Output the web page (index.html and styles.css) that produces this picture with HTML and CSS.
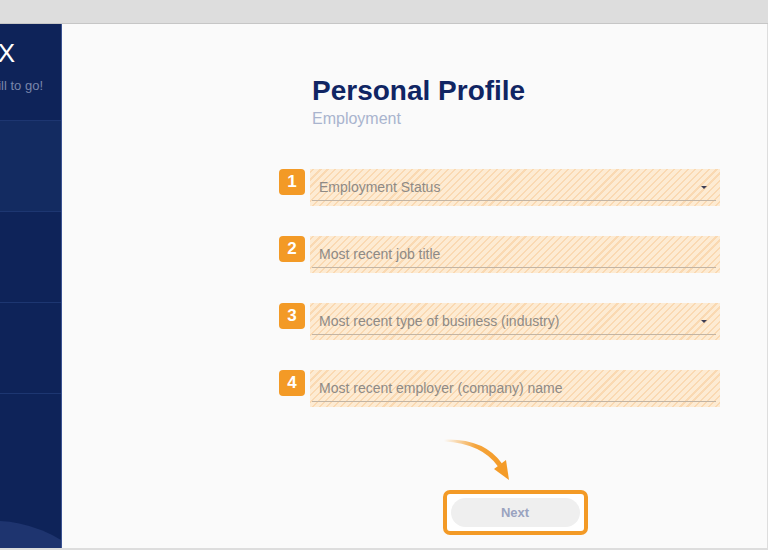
FILE: index.html
```html
<!DOCTYPE html>
<html lang="en">
<head>
<meta charset="utf-8">
<title>Personal Profile</title>
<link rel="stylesheet" href="styles.css">
</head>
<body>
<div class="chrome"></div>
<div class="app">
  <aside class="sidebar">
    <div class="brand-block">
      <div class="brand"><span>SIMPLETAX</span></div>
      <div class="tagline"><span>A few more steps still to go!</span></div>
    </div>
    <div class="nav-item active"></div>
    <div class="nav-item"></div>
    <div class="nav-item"></div>
    <div class="blob"></div>
  </aside>
  <main class="content">
    <div class="column">
      <header class="heading">
        <h1 class="title">Personal Profile</h1>
        <p class="subtitle">Employment</p>
      </header>
      <div class="form">
        <div class="row">
          <span class="badge">1</span>
          <div class="field">
            <div class="field-line"><span class="placeholder">Employment Status</span><span class="caret"></span></div>
          </div>
        </div>
        <div class="row">
          <span class="badge">2</span>
          <div class="field">
            <div class="field-line"><span class="placeholder">Most recent job title</span></div>
          </div>
        </div>
        <div class="row">
          <span class="badge">3</span>
          <div class="field">
            <div class="field-line"><span class="placeholder">Most recent type of business (industry)</span><span class="caret"></span></div>
          </div>
        </div>
        <div class="row">
          <span class="badge">4</span>
          <div class="field">
            <div class="field-line"><span class="placeholder">Most recent employer (company) name</span></div>
          </div>
        </div>
      </div>
      <div class="actions">
        <svg class="pointer" width="75" height="52" viewBox="0 0 75 52" aria-hidden="true">
          <defs>
            <linearGradient id="fade" x1="0" y1="0" x2="1" y2="0">
              <stop offset="0" stop-color="#f49b27" stop-opacity="0"/>
              <stop offset="0.55" stop-color="#f49b27" stop-opacity="0.9"/>
              <stop offset="1" stop-color="#f49b27"/>
            </linearGradient>
          </defs>
          <path d="M4 4.5 Q44 3 62 28.5 L58 31.5 Q42 8.5 4 6.5 Z" fill="url(#fade)"/>
          <path d="M54 34 L66 25 L69 45 Z" fill="#f49b27"/>
        </svg>
        <div class="next-frame">
          <button class="next" type="button">Next</button>
        </div>
      </div>
    </div>
  </main>
</div>
</body>
</html>
```
FILE: styles.css
```css
html, body {
  margin: 0;
  padding: 0;
}
body {
  background: #dddddd;
  width: 768px;
  height: 550px;
  overflow: hidden;
  font-family: "Liberation Sans", Arial, sans-serif;
}
.chrome {
  height: 23px;
  border-bottom: 1px solid #c6c6c6;
  background: #dddddd;
}
.app {
  display: flex;
  height: 524px;
  margin-right: 1px;
}
.sidebar {
  position: relative;
  width: 61px;
  flex: none;
  background: #0e2359;
  border-right: 1px solid #3b5392;
  overflow: hidden;
}
.brand-block {
  box-sizing: border-box;
  height: 97px;
  border-bottom: 1px solid #1d3671;
}
.brand {
  display: flex;
  justify-content: flex-end;
  padding-right: 46px;
  padding-top: 14px;
  color: #ffffff;
  font-size: 26px;
  line-height: 30px;
  white-space: nowrap;
}
.tagline {
  display: flex;
  justify-content: flex-end;
  padding-right: 18px;
  margin-top: 10px;
  color: #7986ab;
  font-size: 13px;
  line-height: 16px;
  white-space: nowrap;
}
.nav-item {
  height: 90px;
  border-bottom: 1px solid #1d3671;
}
.nav-item.active {
  background: #132b61;
}
.blob {
  position: absolute;
  left: -129px;
  top: 497px;
  width: 248px;
  height: 248px;
  border-radius: 50%;
  background: #1e346f;
}
.content {
  flex: 1;
  background: #fafafa;
  padding: 0 47px 0 217px;
}
.column {
  width: 441px;
}
.heading {
  padding: 50px 0 0 33px;
}
.title {
  margin: 0;
  font-size: 28px;
  line-height: 34px;
  font-weight: 700;
  color: #102563;
}
.subtitle {
  margin: 2px 0 0;
  font-size: 16px;
  line-height: 18px;
  color: #a9b4ce;
}
.form {
  display: flex;
  flex-direction: column;
  gap: 30px;
  margin-top: 41px;
}
.row {
  display: flex;
  align-items: flex-start;
  gap: 5px;
}
.badge {
  flex: none;
  width: 26px;
  height: 26px;
  border-radius: 4px;
  background: #f39a26;
  color: #ffffff;
  font-weight: 700;
  font-size: 17px;
  line-height: 26px;
  text-align: center;
}
.field {
  flex: 1;
  height: 37px;
  box-sizing: border-box;
  padding: 0 4px 5px 2px;
  background-color: #fdebd3;
  background-image: repeating-linear-gradient(135deg, #fdebd3 0 2px, #fad9b2 2px 3.5px, #fdebd3 3.5px 5px);
}
.field-line {
  display: flex;
  align-items: center;
  justify-content: space-between;
  height: 32px;
  box-sizing: border-box;
  padding: 6px 0 1px 7px;
  border-bottom: 1px solid #c2b4a4;
}
.placeholder {
  font-size: 14px;
  line-height: 24px;
  color: #8e8a86;
}
.caret {
  width: 0;
  height: 0;
  margin-right: 9px;
  border-left: 3px solid transparent;
  border-right: 3px solid transparent;
  border-top: 3px solid #3d3d55;
}
.actions {
  display: flex;
  flex-direction: column;
  padding-left: 31px;
}
.pointer {
  display: block;
  margin: 28px 0 3px 130px;
}
.next-frame {
  align-self: center;
  width: 145px;
  box-sizing: border-box;
  padding: 4px;
  border: 4px solid #f39a26;
  border-radius: 7px;
  background: #ffffff;
}
.next {
  display: block;
  width: 100%;
  height: 29px;
  border: 0;
  border-radius: 15px;
  background: #efefef;
  color: #9aa3bf;
  font-family: "Liberation Sans", Arial, sans-serif;
  font-weight: 700;
  font-size: 13px;
  padding: 0;
}
```
